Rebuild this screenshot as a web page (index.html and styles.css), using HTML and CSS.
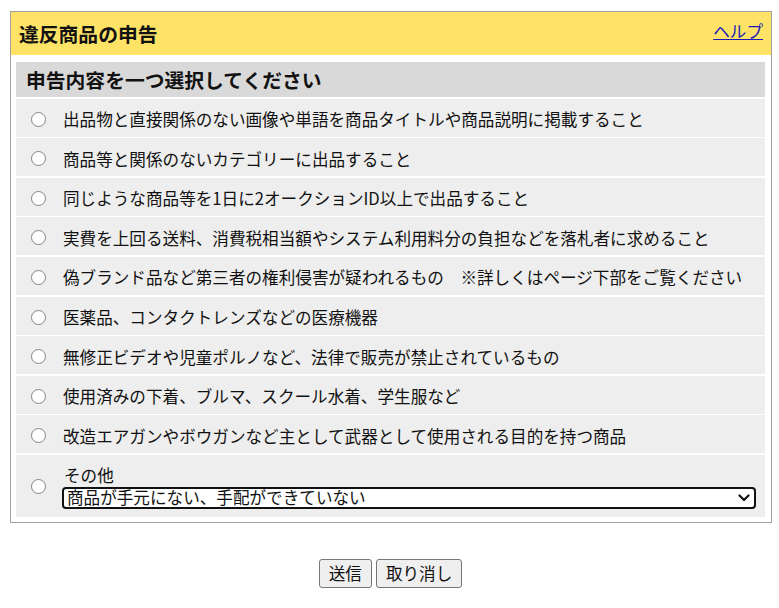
FILE: index.html
```html
<!DOCTYPE html>
<html lang="ja">
<head>
<meta charset="utf-8">
<title>違反商品の申告</title>
<link rel="stylesheet" href="styles.css">
</head>
<body>
<div class="panel">
  <div class="panel-head">
    <h1 class="panel-title">違反商品の申告</h1>
    <a class="help" href="#">ヘルプ</a>
  </div>
  <div class="panel-body">
    <div class="list">
      <div class="list-head">申告内容を一つ選択してください</div>
      <label class="item"><input class="radio" type="radio" name="r"><span>出品物と直接関係のない画像や単語を商品タイトルや商品説明に掲載すること</span></label>
      <label class="item"><input class="radio" type="radio" name="r"><span>商品等と関係のないカテゴリーに出品すること</span></label>
      <label class="item"><input class="radio" type="radio" name="r"><span>同じような商品等を1日に2オークションID以上で出品すること</span></label>
      <label class="item"><input class="radio" type="radio" name="r"><span>実費を上回る送料、消費税相当額やシステム利用料分の負担などを落札者に求めること</span></label>
      <label class="item"><input class="radio" type="radio" name="r"><span>偽ブランド品など第三者の権利侵害が疑われるもの　※詳しくはページ下部をご覧ください</span></label>
      <label class="item"><input class="radio" type="radio" name="r"><span>医薬品、コンタクトレンズなどの医療機器</span></label>
      <label class="item"><input class="radio" type="radio" name="r"><span>無修正ビデオや児童ポルノなど、法律で販売が禁止されているもの</span></label>
      <label class="item"><input class="radio" type="radio" name="r"><span>使用済みの下着、ブルマ、スクール水着、学生服など</span></label>
      <label class="item"><input class="radio" type="radio" name="r"><span>改造エアガンやボウガンなど主として武器として使用される目的を持つ商品</span></label>
      <div class="item item-other">
        <input class="radio" type="radio" name="r">
        <div class="other-body">
          <div class="other-label">その他</div>
          <div class="combo" role="combobox" aria-expanded="false" tabindex="0">
            <span class="combo-value">商品が手元にない、手配ができていない</span>
            <svg class="combo-arrow" width="12" height="8" viewBox="0 0 12 8" aria-hidden="true">
              <path d="M1.5 1.5 L6 6 L10.5 1.5" fill="none" stroke="#111" stroke-width="2.2" stroke-linecap="round" stroke-linejoin="round"/>
            </svg>
          </div>
        </div>
      </div>
    </div>
  </div>
</div>
<div class="actions">
  <button class="btn" type="button">送信</button>
  <button class="btn" type="button">取り消し</button>
</div>
</body>
</html>
```

FILE: styles.css
```css
html, body {
  margin: 0;
  padding: 0;
  background: #ffffff;
}

body {
  font-family: "Noto Sans CJK JP", "Noto Sans", sans-serif;
  font-size: 16.6px;
  color: #111111;
  padding: 11px 8px 0 10px;
}

.panel {
  width: 762px;
  box-sizing: border-box;
  border: 1px solid #a0a0a0;
}

.panel-head {
  background: #ffe366;
  height: 43px;
  display: flex;
  justify-content: space-between;
  align-items: flex-start;
  padding: 0 8px 0 8px;
}

.panel-title {
  margin: 0;
  font-size: 19.8px;
  font-weight: bold;
  line-height: 24px;
  padding-top: 10px;
}

.help {
  color: #1a1ab8;
  font-size: 16.6px;
  line-height: 20px;
  padding-top: 9px;
  text-decoration: underline;
}

.panel-body {
  padding: 7px 6px 5px 5px;
}

.list {
  display: flex;
  flex-direction: column;
  gap: 1.6px;
}

.list-head {
  background: #d9d9d9;
  height: 35px;
  box-sizing: border-box;
  padding: 6px 0 0 10px;
  font-size: 19.8px;
  font-weight: bold;
  line-height: 24px;
}

.item {
  background: #eeeeee;
  height: 38px;
  box-sizing: border-box;
  display: flex;
  align-items: center;
  padding: 3px 0 0 15px;
  line-height: 20px;
}

.radio {
  -webkit-appearance: none;
  appearance: none;
  width: 15px;
  height: 15px;
  box-sizing: border-box;
  border: 1px solid #858585;
  border-radius: 50%;
  background: #ffffff;
  margin: 0 17px 0 0;
  flex: none;
}

.item-other {
  height: 62px;
  padding-top: 2px;
}

.other-body {
  flex: 1;
  display: flex;
  flex-direction: column;
  padding-right: 9px;
}

.other-label {
  line-height: 20px;
  padding-left: 1px;
}

.combo {
  margin-top: 2px;
  margin-left: -1px;
  height: 22px;
  box-sizing: border-box;
  border: 2px solid #111111;
  border-radius: 4px;
  background: #ffffff;
  display: flex;
  align-items: center;
  justify-content: space-between;
  padding: 0 4px 2px 3px;
  line-height: 18px;
}

.combo-value {
  white-space: nowrap;
}

.combo-arrow {
  flex: none;
  margin-top: 2px;
}

.actions {
  display: flex;
  justify-content: center;
  gap: 4px;
  padding: 36px 0 0 0;
  margin-left: -8px;
  margin-right: -8px;
}

.btn {
  font-family: inherit;
  font-size: 16.6px;
  line-height: 23px;
  padding: 2px 9px;
  background: #efefef;
  border: 1px solid #767676;
  border-radius: 3px;
  color: #111111;
}
```
